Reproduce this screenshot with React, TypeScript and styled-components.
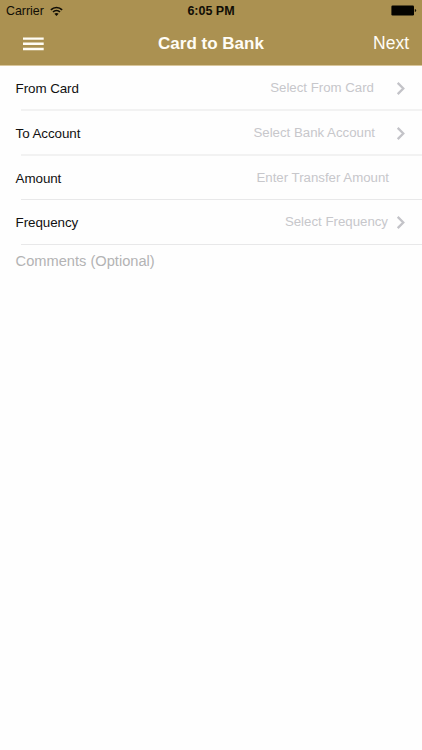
import React from 'react';
import styled, { createGlobalStyle } from 'styled-components';

const GlobalStyle = createGlobalStyle`
  * { box-sizing: border-box; }
  body { margin: 0; background: #fefefe; }
`;

const Screen = styled.main`
  width: 422px;
  height: 750px;
  overflow: hidden;
  background: #fefefe;
  font-family: 'Liberation Sans', Arial, sans-serif;
  white-space: nowrap;
`;

const Header = styled.header`
  height: 66px;
  background: #ab9151;
  border-bottom: 1px solid #d9c69c;
`;

const StatusBar = styled.div`
  display: grid;
  grid-template-columns: 1fr auto 1fr;
  height: 22px;
  padding: 0 6px;
  line-height: 22px;
  color: #100d05;
`;

const Carrier = styled.div`
  display: flex;
  align-items: center;
  gap: 6px;
  font-size: 12.4px;
`;

const Clock = styled.time`
  font-size: 12.5px;
  font-weight: 700;
`;

const Battery = styled.svg`
  justify-self: end;
  margin-top: 5px;
  margin-right: -1px;
`;

const NavBar = styled.nav`
  display: grid;
  grid-template-columns: 1fr auto 1fr;
  align-items: center;
  height: 43px;
  padding: 0 13px 0 23px;
  color: #fffdf6;
`;

const MenuButton = styled.button`
  display: flex;
  padding: 0;
  border: 0;
  background: none;
  color: inherit;
`;

const Title = styled.h1`
  margin: 0 10px 0 0;
  font-size: 17px;
  line-height: 20px;
  font-weight: 700;
`;

const NextButton = styled.button`
  justify-self: end;
  margin-bottom: 1px;
  padding: 0;
  border: 0;
  background: none;
  color: inherit;
  font: 17.5px/20px 'Liberation Sans', Arial, sans-serif;
`;

const Row = styled.div<{ $height: number; $soft?: boolean }>`
  display: flex;
  align-items: center;
  height: ${(p) => p.$height}px;
  padding: 0 16px 0 15.6px;
  background: linear-gradient(${(p) => (p.$soft ? '#f2f2f2, #f2f2f2' : '#e8e8e9, #e8e8e9')})
    21px 100% / 401px ${(p) => (p.$soft ? 2 : 1)}px no-repeat;
`;

const Label = styled.span`
  font-size: 13.4px;
  letter-spacing: -0.08px;
  color: #111;
`;

const Value = styled.span<{ $gap: number }>`
  margin-left: auto;
  margin-right: ${(p) => p.$gap}px;
  padding-bottom: 1px;
  font-size: 13.25px;
  line-height: 16px;
  color: #c7c7cb;
`;

const Comments = styled.div`
  padding: 7px 15.6px;
  font-size: 14.65px;
  line-height: 18px;
  color: #b3b3b4;
`;

const Chevron = () => (
  <svg width="10" height="14" viewBox="0 0 10 14" fill="none">
    <path d="M1.7 .9L7.3 6.5L1.7 12.1" stroke="#c3c3c8" strokeWidth="2.3" />
  </svg>
);

const rows = [
  { label: 'From Card', value: 'Select From Card', gap: 22, chevron: true, soft: true, height: 45 },
  { label: 'To Account', value: 'Select Bank Account', gap: 21, chevron: true, soft: true, height: 45 },
  { label: 'Amount', value: 'Enter Transfer Amount', gap: 17, chevron: false, soft: false, height: 44 },
  { label: 'Frequency', value: 'Select Frequency', gap: 8, chevron: true, soft: false, height: 45 },
];

export default function App() {
  return (
    <>
      <GlobalStyle />
      <Screen>
        <Header>
          <StatusBar>
            <Carrier>
              Carrier
              <svg width="13" height="11" viewBox="0 0 13 11" fill="none" stroke="#100d05">
                <path d="M.9 3.8C4 .7 9 .7 12.1 3.8" strokeWidth="1.7" />
                <path d="M3 6C5 4.1 8 4.1 10 6" strokeWidth="1.7" />
                <path d="M6.5 10L4.4 7.8Q6.5 6.2 8.6 7.8Z" fill="#100d05" stroke="none" />
              </svg>
            </Carrier>
            <Clock>6:05 PM</Clock>
            <Battery width="26" height="12" viewBox="0 0 26 12">
              <rect x=".4" y=".6" width="22.6" height="9.8" rx="1.2" fill="#050400" />
              <path d="M23.8 4Q25.2 4.2 25.2 5.5T23.8 7Z" fill="#171206" />
            </Battery>
          </StatusBar>
          <NavBar>
            <MenuButton aria-label="Menu">
              <svg width="21" height="14" viewBox="0 0 21 14" fill="currentColor">
                <path d="M0 .4h20.7v2.4H0zM0 5.6h20.7V8H0zM0 10.8h20.7v2.4H0z" />
              </svg>
            </MenuButton>
            <Title>Card to Bank</Title>
            <NextButton>Next</NextButton>
          </NavBar>
        </Header>
        {rows.map((r) => (
          <Row key={r.label} $height={r.height} $soft={r.soft}>
            <Label>{r.label}</Label>
            <Value $gap={r.gap}>{r.value}</Value>
            {r.chevron && <Chevron />}
          </Row>
        ))}
        <Comments>Comments (Optional)</Comments>
      </Screen>
    </>
  );
}
